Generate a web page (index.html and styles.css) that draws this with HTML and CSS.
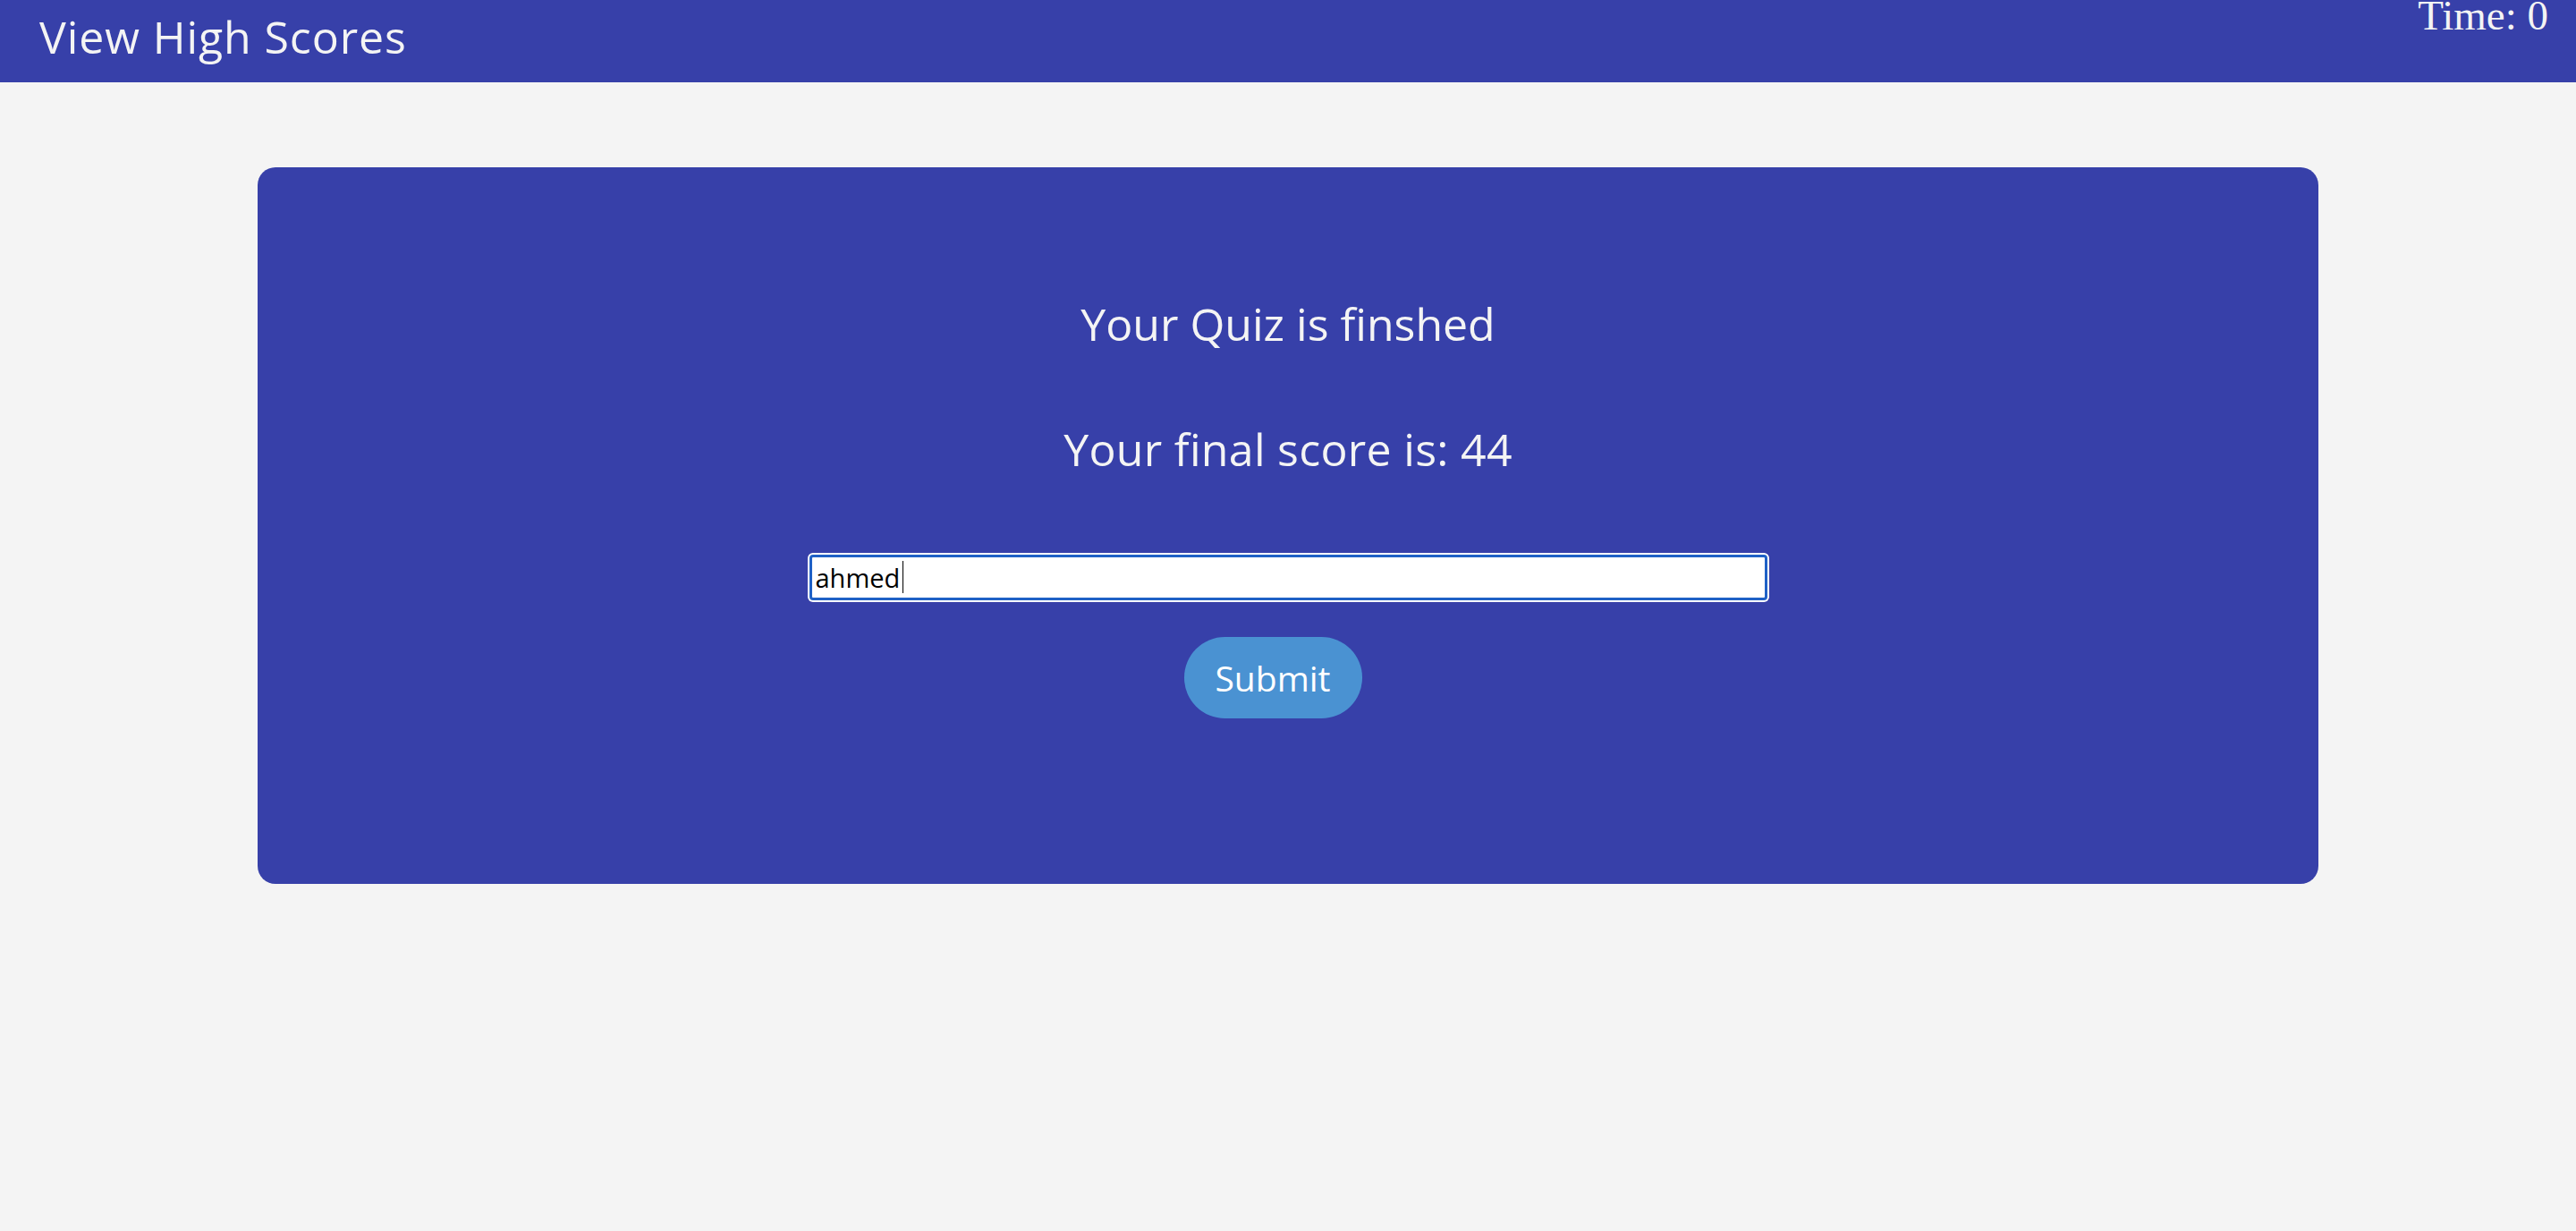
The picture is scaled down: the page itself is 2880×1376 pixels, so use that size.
FILE: index.html
```html
<!DOCTYPE html>
<html lang="en">
<head>
<meta charset="utf-8">
<title>Code Quiz</title>
<link rel="stylesheet" href="styles.css">
</head>
<body>
<header class="topbar">
  <a class="highscores" href="#">View High Scores</a>
  <div class="timer">Time: 0</div>
</header>
<main class="card">
  <h2 class="card-title">Your Quiz is finshed</h2>
  <p class="final-score">Your final score is: 44</p>
  <form class="score-form">
    <div class="input-wrap">
      <input class="initials" type="text" value="ahmed">
      <span class="caret"></span>
    </div>
    <button class="submit" type="button">Submit</button>
  </form>
</main>
</body>
</html>
```
FILE: styles.css
```css
html, body {
  margin: 0;
  padding: 0;
}
body {
  background: #f4f4f4;
  font-family: "Open Sans", "Noto Sans", sans-serif;
  color: #f4f4f4;
  min-height: 1376px;
}
.topbar {
  height: 92px;
  background: #3740a9;
  display: flex;
  justify-content: space-between;
  align-items: flex-start;
  padding: 0 31px 0 44px;
  box-sizing: border-box;
}
.highscores {
  color: #f4f4f4;
  text-decoration: none;
  font-size: 50px;
  letter-spacing: 0.9px;
  line-height: 50px;
  margin-top: 16px;
}
.timer {
  font-family: "Liberation Serif", "Times New Roman", serif;
  font-size: 47px;
  line-height: 35px;
  color: #f4f4f4;
}
.card {
  width: 2304px;
  height: 801px;
  margin: 95px auto 0;
  background: #3740a9;
  border-radius: 20px;
  box-sizing: border-box;
  padding-top: 150px;
  display: flex;
  flex-direction: column;
  align-items: center;
}
.card-title {
  margin: 0;
  font-weight: 400;
  font-size: 50px;
  line-height: 50px;
}
.final-score {
  margin: 90px 0 0;
  font-size: 50px;
  letter-spacing: 0.3px;
  line-height: 50px;
}
.score-form {
  margin-top: 93px;
  display: flex;
  flex-direction: column;
  align-items: center;
}
.input-wrap {
  position: relative;
}
.initials {
  display: block;
  box-sizing: border-box;
  width: 1071px;
  height: 51px;
  margin: 0;
  padding: 0 4px;
  border: 3.5px solid #1f61c6;
  border-radius: 4px;
  box-shadow: 0 0 0 2px #ffffff;
  outline: none;
  background: #ffffff;
  color: #000000;
  font-family: "Open Sans", "Noto Sans", sans-serif;
  font-size: 29px;
}
.caret {
  position: absolute;
  left: 104px;
  top: 7px;
  width: 1.5px;
  height: 36px;
  background: #000000;
}
.submit {
  margin-top: 41px;
  margin-right: 34px;
  width: 199px;
  height: 91px;
  border: none;
  border-radius: 46px;
  background: #4a92d2;
  color: #ffffff;
  font-family: "Open Sans", "Noto Sans", sans-serif;
  font-size: 39px;
  padding: 0;
}
```
